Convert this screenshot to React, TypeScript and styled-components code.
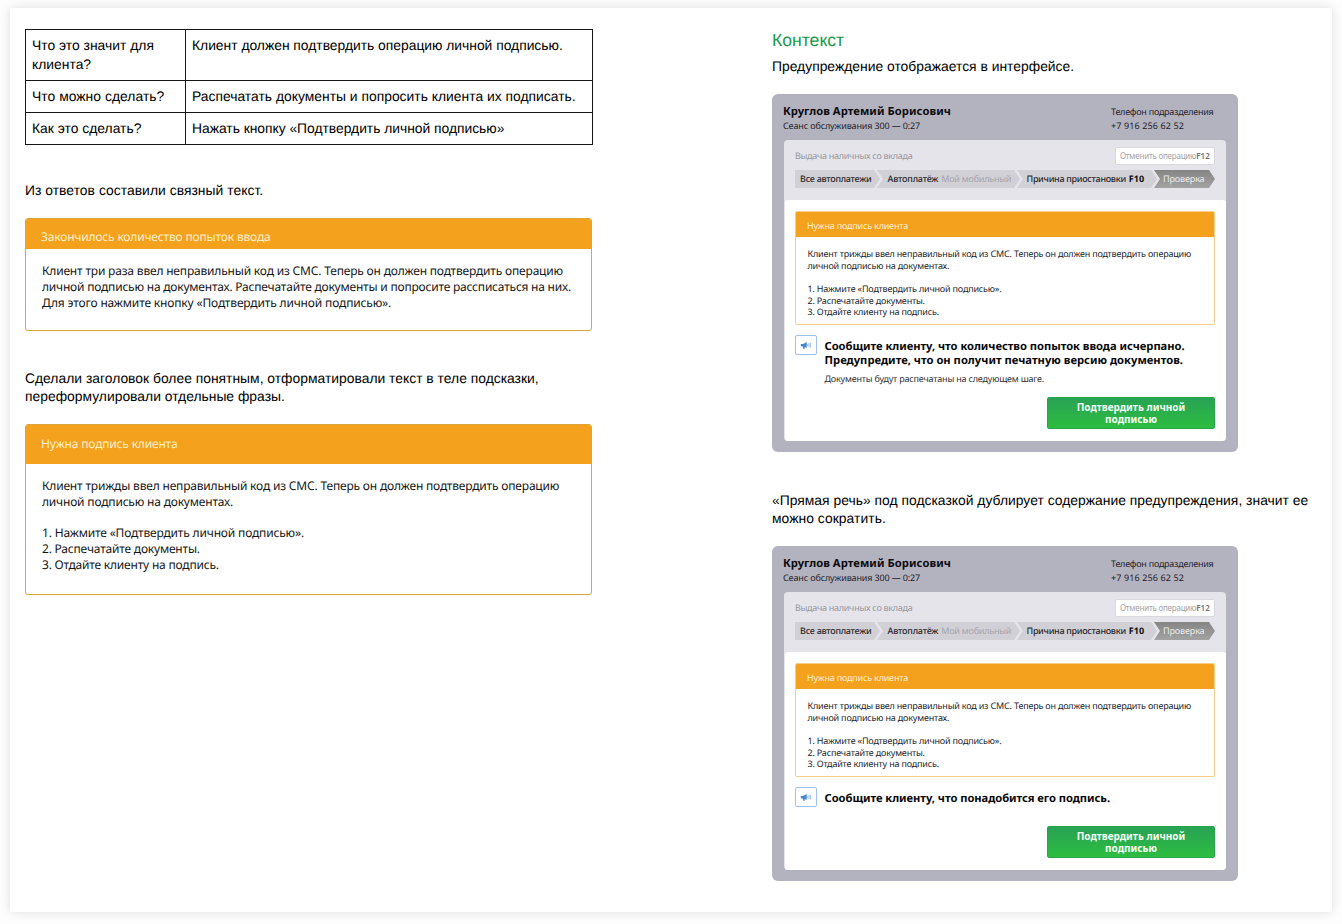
import React from 'react';
import styled, { createGlobalStyle } from 'styled-components';

const GlobalStyle = createGlobalStyle`
  * { box-sizing: border-box; }
  body {
    margin: 0;
    background: #fff;
    color: #000;
    font-family: "Liberation Sans", Arial, sans-serif;
    text-rendering: geometricPrecision;
  }
`;

const uiFont = '"Noto Sans", "Open Sans", sans-serif';

const Canvas = styled.div`
  height: 924px;
  padding: 8px 10px 12px;
  background: #fdfdfd;
  overflow: hidden;
`;

const Sheet = styled.main`
  display: flex;
  height: 904px;
  background: #fff;
  box-shadow: 0 0 10px rgba(0, 0, 0, 0.12);
`;

const LeftColumn = styled.section`
  width: 762px;
  padding: 21px 0 0 15px;
`;

const RightColumn = styled.section`
  width: 560px;
  padding-top: 21px;
`;

const Line = styled.span<{ $ls?: number }>`
  display: block;
  white-space: nowrap;
  letter-spacing: ${(p) => p.$ls ?? 0}px;
`;

const Table = styled.table`
  width: 568px;
  table-layout: fixed;
  border-collapse: collapse;
  font-size: 13.88px;
  line-height: 19px;
`;

const TableRow = styled.tr<{ $height: number }>`
  height: ${(p) => p.$height}px;
`;

const Cell = styled.td<{ $width?: number }>`
  width: ${(p) => (p.$width ? `${p.$width}px` : 'auto')};
  padding: 6px 0 0 6px;
  border: 1px solid #161616;
  vertical-align: top;
`;

const Paragraph = styled.p<{ $top: number }>`
  margin: ${(p) => p.$top}px 0 0;
  font-size: 13.88px;
  line-height: 18px;
`;

const Heading = styled.h2`
  margin: 0;
  font-size: 17.6px;
  font-weight: 400;
  line-height: 22px;
  color: #189a48;
`;

const Callout = styled.div<{ $top: number; $height: number }>`
  width: 567px;
  height: ${(p) => p.$height}px;
  margin-top: ${(p) => p.$top}px;
  border: 1px solid #dda43a;
  border-radius: 3px;
  overflow: hidden;
  font-family: ${uiFont};
  font-size: 12px;
`;

const CalloutTitle = styled.div<{ $height: number; $shift?: number }>`
  display: flex;
  align-items: center;
  height: ${(p) => p.$height}px;
  padding: ${(p) => p.$shift ?? 0}px 0 2px 15px;
  background: #f4a11d;
  color: #fff0c8;
`;

const CalloutBody = styled.div`
  padding: 14px 0 0 16px;
  line-height: 15.75px;
  color: #161616;
`;

const Gap = styled.div<{ $height: number }>`
  height: ${(p) => p.$height}px;
`;

const Frame = styled.div<{ $top: number; $height: number }>`
  display: flex;
  flex-direction: column;
  width: 466px;
  height: ${(p) => p.$height}px;
  margin-top: ${(p) => p.$top}px;
  padding: 0 12px 11px;
  border-radius: 6px;
  background: #b3b2bf;
  font-family: ${uiFont};
  font-size: 9px;
  color: #23232b;
`;

const FrameHeader = styled.header`
  display: flex;
  justify-content: space-between;
  height: 46px;
  padding: 11px 12px 0 0;
  line-height: 14px;
`;

const ClientName = styled.div`
  margin-left: -1px;
  font-size: 11.2px;
  font-weight: 700;
  line-height: 14px;
  color: #0b0b0f;
`;

const Session = styled.div`
  margin-left: -1px;
`;

const Phone = styled.div`
  width: 103px;
`;

const Panel = styled.div`
  display: flex;
  flex-direction: column;
  flex: 1;
  border-radius: 4px;
  background: #e5e4eb;
  overflow: hidden;
`;

const OperationBar = styled.div`
  display: flex;
  justify-content: space-between;
  padding: 7px 11px 0 11px;
  height: 30px;
  line-height: 18px;
  color: #97979f;
`;

const CancelButton = styled.button`
  display: flex;
  align-items: center;
  width: 100px;
  height: 18px;
  padding: 0 0 2px 4px;
  border: 1px solid #d8d8de;
  border-radius: 2px;
  background: #fff;
  font-family: ${uiFont};
  font-size: 8px;
  color: #a3a3a6;
`;

const HotKey = styled.b<{ $muted?: boolean }>`
  font-weight: ${(p) => (p.$muted ? 600 : 700)};
  font-size: ${(p) => (p.$muted ? 8 : 9)}px;
  color: ${(p) => (p.$muted ? '#6f6f73' : '#0d0d10')};
`;

const Steps = styled.nav`
  display: flex;
  height: 18px;
  margin: 0 11px;
`;

const Step = styled.div<{ $width: number; $pad: number; $active?: boolean; $first?: boolean }>`
  display: flex;
  flex: none;
  align-items: center;
  gap: 3px;
  width: ${(p) => p.$width}px;
  margin-right: -3px;
  padding: 0 0 1px ${(p) => p.$pad}px;
  background: ${(p) => (p.$active ? 'linear-gradient(#858585, #a3a3a3)' : '#d1d0d6')};
  color: ${(p) => (p.$active ? '#eeeeee' : '#28282d')};
  font-weight: ${(p) => (p.$active ? 400 : 500)};
  clip-path: ${(p) =>
    p.$first
      ? 'polygon(0 0, calc(100% - 6px) 0, 100% 50%, calc(100% - 6px) 100%, 0 100%)'
      : 'polygon(0 0, calc(100% - 6px) 0, 100% 50%, calc(100% - 6px) 100%, 0 100%, 6px 50%)'};
`;

const StepNote = styled.span`
  font-weight: 400;
  letter-spacing: -0.22px;
  white-space: nowrap;
  color: #a5a5ac;
`;

const Content = styled.div`
  display: flex;
  flex-direction: column;
  flex: 1;
  margin: 12px 0 0 1px;
  padding: 11px 11px 12px 10px;
  border-radius: 3px 3px 0 0;
  background: #fff;
`;

const Alert = styled.div`
  height: 114px;
  border: 1px solid #f5ce8b;
  border-radius: 2px;
  overflow: hidden;
  line-height: 11.7px;
`;

const AlertTitle = styled.div`
  display: flex;
  align-items: center;
  height: 26px;
  margin: -1px -1px 0;
  padding: 3px 0 0 12px;
  background: #f4a11d;
  color: #fff0cf;
`;

const AlertBody = styled.div`
  padding: 11px 0 0 11.5px;
`;

const Speech = styled.div`
  display: flex;
  gap: 7px;
  margin-top: 10px;
`;

const SpeechIcon = styled.div`
  display: flex;
  align-items: center;
  justify-content: center;
  width: 22px;
  height: 20px;
  border: 1px solid #9dc0ee;
  border-radius: 2px;
`;

const SpeechText = styled.div`
  padding: 5px 0 0 0.5px;
  font-size: 11.2px;
  font-weight: 700;
  line-height: 14px;
  color: #08080a;
`;

const SpeechNote = styled.div`
  margin-top: 5px;
  font-size: 9px;
  font-weight: 400;
  line-height: 12px;
  color: #303033;
`;

const ConfirmButton = styled.button`
  align-self: flex-end;
  width: 168px;
  height: 32px;
  margin-top: auto;
  padding: 0;
  border: 1px solid #28a549;
  border-radius: 2px;
  background: linear-gradient(#28a255, #2dbd40);
  font-family: ${uiFont};
  font-size: 10px;
  font-weight: 700;
  line-height: 12px;
  color: #f3fff4;
`;

function Megaphone() {
  return (
    <svg width="12" height="9" viewBox="0 0 12 9" aria-hidden="true">
      <path d="M.8 3 3 3 6.7 1V7L4.6 6 4.7 7.7H3.2L2.7 5.6.8 5.3Z" fill="#4386d3" />
      <path d="M7.7 2.9v2.5M9 2.2v3.9M10.4 1.8v4.7" stroke="#8db9ec" strokeWidth=".9" fill="none" />
    </svg>
  );
}

interface OperatorScreenProps {
  top: number;
  height: number;
  speech: { text: string; spacing: number }[];
  note?: string;
}

function OperatorScreen({ top, height, speech, note }: OperatorScreenProps) {
  return (
    <Frame $top={top} $height={height}>
      <FrameHeader>
        <div>
          <ClientName><Line $ls={0.06}>Круглов Артемий Борисович</Line></ClientName>
          <Session><Line $ls={-0.14}>Сеанс обслуживания 300 — 0:27</Line></Session>
        </div>
        <Phone>
          <Line $ls={-0.25}>Телефон подразделения</Line>
          <Line $ls={0.11}>+7 916 256 62 52</Line>
        </Phone>
      </FrameHeader>
      <Panel>
        <OperationBar>
          <Line $ls={-0.28}>Выдача наличных со вклада</Line>
          <CancelButton>
            <Line $ls={-0.22}>Отменить операцию</Line>
            <HotKey $muted>F12</HotKey>
          </CancelButton>
        </OperationBar>
        <Steps>
          <Step $width={85} $pad={5} $first><Line $ls={-0.26}>Все автоплатежи</Line></Step>
          <Step $width={143} $pad={10.5}>
            <Line $ls={-0.2}>Автоплатёж</Line>
            <StepNote>Мой мобильный</StepNote>
          </Step>
          <Step $width={140} $pad={9.5}>
            <Line $ls={-0.3}>Причина приостановки</Line>
            <HotKey>F10</HotKey>
          </Step>
          <Step $width={61} $pad={9} $active><Line $ls={-0.13}>Проверка</Line></Step>
        </Steps>
        <Content>
          <Alert>
            <AlertTitle><Line $ls={-0.2}>Нужна подпись клиента</Line></AlertTitle>
            <AlertBody>
              <Line $ls={-0.193}>Клиент трижды ввел неправильный код из СМС. Теперь он должен подтвердить операцию</Line>
              <Line $ls={-0.193}>личной подписью на документах.</Line>
              <Gap $height={11.6} />
              <Line $ls={-0.19}>1. Нажмите «Подтвердить личной подписью».</Line>
              <Line $ls={-0.19}>2. Распечатайте документы.</Line>
              <Line $ls={-0.19}>3. Отдайте клиенту на подпись.</Line>
            </AlertBody>
          </Alert>
          <Speech>
            <SpeechIcon><Megaphone /></SpeechIcon>
            <SpeechText>
              {speech.map((s) => <Line key={s.text} $ls={s.spacing}>{s.text}</Line>)}
              {note && <SpeechNote><Line $ls={-0.194}>{note}</Line></SpeechNote>}
            </SpeechText>
          </Speech>
          <ConfirmButton>
            <Line>Подтвердить личной</Line>
            <Line>подписью</Line>
          </ConfirmButton>
        </Content>
      </Panel>
    </Frame>
  );
}

export default function App() {
  return (
    <>
      <GlobalStyle />
      <Canvas>
        <Sheet>
          <LeftColumn>
            <Table>
              <tbody>
                <TableRow $height={51}>
                  <Cell $width={160}><Line>Что это значит для</Line><Line>клиента?</Line></Cell>
                  <Cell><Line $ls={-0.02}>Клиент должен подтвердить операцию личной подписью.</Line></Cell>
                </TableRow>
                <TableRow $height={32}>
                  <Cell><Line $ls={0.03}>Что можно сделать?</Line></Cell>
                  <Cell><Line>Распечатать документы и попросить клиента их подписать.</Line></Cell>
                </TableRow>
                <TableRow $height={32}>
                  <Cell><Line>Как это сделать?</Line></Cell>
                  <Cell><Line $ls={-0.03}>Нажать кнопку «Подтвердить личной подписью»</Line></Cell>
                </TableRow>
              </tbody>
            </Table>
            <Paragraph $top={36}><Line $ls={0.03}>Из ответов составили связный текст.</Line></Paragraph>
            <Callout $top={19} $height={113}>
              <CalloutTitle $height={30} $shift={6}><Line $ls={-0.175}>Закончилось количество попыток ввода</Line></CalloutTitle>
              <CalloutBody>
                <Line $ls={-0.184}>Клиент три раза ввел неправильный код из СМС. Теперь он должен подтвердить операцию</Line>
                <Line $ls={-0.209}>личной подписью на документах. Распечатайте документы и попросите рассписаться на них.</Line>
                <Line $ls={-0.16}>Для этого нажмите кнопку «Подтвердить личной подписью».</Line>
              </CalloutBody>
            </Callout>
            <Paragraph $top={38}>
              <Line>Сделали заголовок более понятным, отформатировали текст в теле подсказки,</Line>
              <Line>переформулировали отдельные фразы.</Line>
            </Paragraph>
            <Callout $top={19} $height={171}>
              <CalloutTitle $height={39}><Line $ls={-0.179}>Нужна подпись клиента</Line></CalloutTitle>
              <CalloutBody>
                <Line $ls={-0.184}>Клиент трижды ввел неправильный код из СМС. Теперь он должен подтвердить операцию</Line>
                <Line $ls={-0.19}>личной подписью на документах.</Line>
                <Gap $height={15.75} />
                <Line $ls={-0.169}>1. Нажмите «Подтвердить личной подписью».</Line>
                <Line $ls={-0.2}>2. Распечатайте документы.</Line>
                <Line $ls={-0.2}>3. Отдайте клиенту на подпись.</Line>
              </CalloutBody>
            </Callout>
          </LeftColumn>
          <RightColumn>
            <Heading>Контекст</Heading>
            <Paragraph $top={6}><Line>Предупреждение отображается в интерфейсе.</Line></Paragraph>
            <OperatorScreen
              top={19}
              height={358}
              speech={[
                { text: 'Сообщите клиенту, что количество попыток ввода исчерпано.', spacing: -0.04 },
                { text: 'Предупредите, что он получит печатную версию документов.', spacing: 0.01 },
              ]}
              note="Документы будут распечатаны на следующем шаге."
            />
            <Paragraph $top={39}>
              <Line $ls={0.01}>«Прямая речь» под подсказкой дублирует содержание предупреждения, значит ее</Line>
              <Line $ls={0.04}>можно сократить.</Line>
            </Paragraph>
            <OperatorScreen
              top={19}
              height={335}
              speech={[{ text: 'Сообщите клиенту, что понадобится его подпись.', spacing: -0.05 }]}
            />
          </RightColumn>
        </Sheet>
      </Canvas>
    </>
  );
}
